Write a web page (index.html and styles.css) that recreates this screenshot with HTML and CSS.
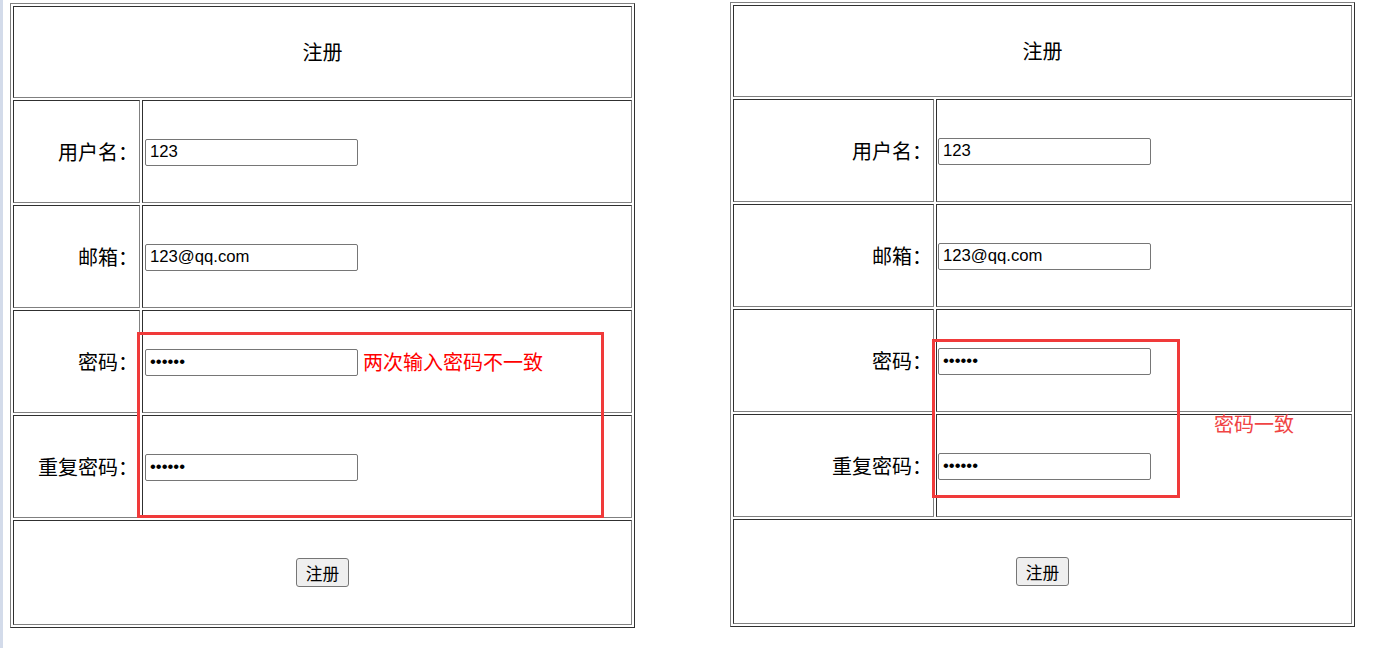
FILE: index.html
```html
<!DOCTYPE html>
<html lang="zh-CN">
<head>
<meta charset="utf-8">
<title>注册</title>
<link rel="stylesheet" href="styles.css">
</head>
<body>
<div class="page">
  <div class="strip"></div>

  <div class="panel panel-left">
    <table class="form">
      <colgroup><col class="c-label-left"><col class="c-field-left"></colgroup>
      <tr class="row-title"><td colspan="2" class="title">注册</td></tr>
      <tr class="row"><td class="label">用户名：</td><td class="field"><input class="text" type="text" value="123"></td></tr>
      <tr class="row"><td class="label">邮箱：</td><td class="field"><input class="text" type="text" value="123@qq.com"></td></tr>
      <tr class="row"><td class="label">密码：</td><td class="field"><input class="text" type="password" value="123456"><span class="error">两次输入密码不一致</span></td></tr>
      <tr class="row"><td class="label">重复密码：</td><td class="field"><input class="text" type="password" value="123456"></td></tr>
      <tr class="row-last"><td colspan="2" class="action"><button class="btn" type="button">注册</button></td></tr>
    </table>
    <div class="mark mark-left"></div>
  </div>

  <div class="panel panel-right">
    <table class="form">
      <colgroup><col class="c-label-right"><col class="c-field-right"></colgroup>
      <tr class="row-title"><td colspan="2" class="title">注册</td></tr>
      <tr class="row"><td class="label">用户名：</td><td class="field"><input class="text" type="text" value="123"></td></tr>
      <tr class="row"><td class="label">邮箱：</td><td class="field"><input class="text" type="text" value="123@qq.com"></td></tr>
      <tr class="row"><td class="label">密码：</td><td class="field"><input class="text" type="password" value="123456"></td></tr>
      <tr class="row"><td class="label">重复密码：</td><td class="field"><input class="text" type="password" value="123456"></td></tr>
      <tr class="row-last"><td colspan="2" class="action"><button class="btn" type="button">注册</button></td></tr>
    </table>
    <div class="mark mark-right"></div>
    <div class="note">密码一致</div>
  </div>
</div>
</body>
</html>
```

FILE: styles.css
```css
html, body {
  margin: 0;
  padding: 0;
  background: #ffffff;
}

body {
  font-family: "Noto Sans CJK SC", "Liberation Sans", sans-serif;
  color: #000000;
}

.page {
  display: flex;
  align-items: flex-start;
  height: 648px;
}

.strip {
  width: 3px;
  align-self: stretch;
  background: #d3dbea;
}

.panel {
  position: relative;
}

.panel-left {
  margin-left: 7px;
  margin-top: 3px;
}

.panel-right {
  margin-left: 95px;
  margin-top: 2px;
}

.form {
  width: 625px;
  table-layout: fixed;
  border-collapse: separate;
  border-spacing: 2px;
  border: 1px solid;
  border-color: #808080 #303030 #303030 #808080;
  box-sizing: border-box;
}

.c-label-left { width: 127px; }
.c-field-left { width: 490px; }
.c-label-right { width: 201px; }
.c-field-right { width: 416px; }

.form td {
  box-sizing: border-box;
  border: 1px solid;
  border-color: #303030 #808080 #808080 #303030;
  padding: 1px;
  font-size: 20px;
  line-height: 24px;
  vertical-align: middle;
}

.row-title td { height: 92px; }
.row td { height: 103px; }
.row-last td { height: 105px; }

.title, .action {
  text-align: center;
}

.label {
  text-align: right;
  white-space: nowrap;
}

.field {
  text-align: left;
  white-space: nowrap;
}

.text {
  box-sizing: border-box;
  width: 213px;
  height: 27px;
  margin: 0 0 0 1px;
  padding: 0 4px;
  border: 1px solid #767676;
  border-radius: 2px;
  font-family: "Liberation Sans", Arial, sans-serif;
  font-size: 16.7px;
  color: #000000;
  background: #ffffff;
  vertical-align: middle;
}

.panel-right .text {
  margin-left: 0;
}

.error {
  margin-left: 5px;
  color: #ff0000;
  font-size: 20px;
  vertical-align: middle;
}

.btn {
  box-sizing: border-box;
  width: 53px;
  height: 29px;
  padding: 0;
  border: 1px solid #767676;
  border-radius: 3px;
  background: #efefef;
  font-family: "Noto Sans CJK SC", sans-serif;
  font-size: 16.7px;
  line-height: 20px;
  color: #000000;
}

.mark {
  position: absolute;
  box-sizing: border-box;
  border: 3px solid #f03a3a;
}

.mark-left {
  left: 127px;
  top: 329px;
  width: 467px;
  height: 186px;
}

.mark-right {
  left: 202px;
  top: 337px;
  width: 248px;
  height: 159px;
}

.note {
  position: absolute;
  left: 484px;
  top: 410px;
  font-size: 20px;
  line-height: 24px;
  color: #f04444;
  white-space: nowrap;
}
```
